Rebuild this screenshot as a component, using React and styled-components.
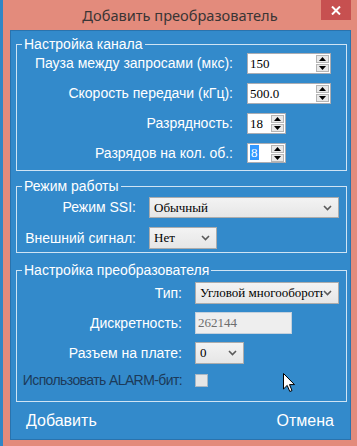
import React from "react";
import styled, { createGlobalStyle } from "styled-components";

const Global = createGlobalStyle`
  html, body { margin: 0; padding: 0; }
  body {
    background: #2f86c6;
    font-family: "Liberation Sans", Arial, sans-serif;
    width: 357px;
    height: 446px;
    overflow: hidden;
  }
`;

const Screen = styled.div`
  position: relative;
  display: flex;
  height: 446px;
  padding-left: 3px;
  box-sizing: border-box;
`;

const Window = styled.div`
  width: 354px;
  height: 446px;
  background: #e38b7c;
  display: flex;
  flex-direction: column;
`;

const TitleBar = styled.div`
  height: 30px;
  display: grid;
  grid-template-columns: 1fr auto 1fr;
  align-items: start;
`;

const Title = styled.div`
  grid-column: 2;
  align-self: center;
  font-family: "Noto Sans", "Liberation Sans", sans-serif;
  font-size: 14.6px;
  color: #3a3535;
  white-space: nowrap;
`;

const Close = styled.div`
  grid-column: 3;
  justify-self: end;
  margin-right: 6px;
  width: 30px;
  height: 20px;
  background: #c75050;
  display: flex;
  align-items: center;
  justify-content: center;
`;

const Client = styled.div`
  margin: 0 6px 0 7px;
  height: 410px;
  box-sizing: border-box;
  border: 1px solid #2a73ad;
  background: #338acb;
  display: flex;
  flex-direction: column;
  padding: 5px 3px 0 5px;
`;

const Group = styled.fieldset`
  margin: ${(p) => p.$mt || 0}px 0 0 0;
  border: 1px solid #cfe4f4;
  padding: ${(p) => p.$pt}px 0 ${(p) => p.$pb}px 0;
  min-width: 0;
`;

const Legend = styled.legend`
  margin-left: 5px;
  padding: 0 2px;
  font-size: 14px;
  line-height: 16px;
  color: #ffffff;
`;

const Rows = styled.div`
  display: grid;
  grid-template-columns: ${(p) => p.$label}px auto;
  column-gap: ${(p) => p.$gap}px;
  row-gap: ${(p) => p.$rowGap}px;
  align-items: center;
  justify-items: start;
`;

const Label = styled.div`
  justify-self: end;
  font-size: 14px;
  line-height: 17px;
  letter-spacing: ${(p) => (p.$tight ? "-0.6px" : "normal")};
  color: ${(p) => (p.$dim ? "#1c3a5a" : "#ffffff")};
  white-space: nowrap;
`;

const Box = styled.div`
  width: ${(p) => p.$w}px;
  height: ${(p) => p.$h || 21}px;
  box-sizing: border-box;
  border: 1px solid ${(p) => (p.$disabled ? "#c4d0dc" : "#abadb3")};
  background: ${(p) => (p.$disabled ? "#eeeeee" : "#ffffff")};
  display: flex;
  align-items: center;
  font-family: "Liberation Serif", "Times New Roman", serif;
  font-size: 13px;
  color: ${(p) => (p.$disabled ? "#6d6d6d" : "#000000")};
  padding-left: 2px;
`;

const BoxText = styled.span`
  flex: 1;
  white-space: nowrap;
  overflow: hidden;
`;

const Selected = styled.span`
  background: #3399ff;
  color: #ffffff;
  padding: 0 1px;
`;

const SpinCol = styled.div`
  display: flex;
  flex-direction: column;
  gap: 1px;
  width: 13px;
  margin: 0 1px;
`;

const SpinBtn = styled.div`
  height: 8px;
  box-sizing: border-box;
  border: 1px solid #b5b5b5;
  background: #e8e8e8;
  display: flex;
  align-items: center;
  justify-content: center;
`;

const Select = styled.div`
  width: ${(p) => p.$w}px;
  height: ${(p) => p.$h || 22}px;
  box-sizing: border-box;
  border: 1px solid #acacac;
  background: linear-gradient(#f3f3f3, #e6e6e6);
  display: flex;
  align-items: center;
  padding: 0 6px 0 4px;
  font-family: "Liberation Serif", "Times New Roman", serif;
  font-size: 13px;
  color: #000;
`;

const Check = styled.div`
  width: 13px;
  height: 13px;
  box-sizing: border-box;
  border: 1px solid #a9b7c4;
  background: #e6e6e6;
`;

const Footer = styled.div`
  flex: 1;
  display: flex;
  align-items: center;
  justify-content: space-between;
  padding: 0 13px 0 10px;
`;

const FooterButton = styled.div`
  font-size: 16px;
  color: #ffffff;
`;

const Cursor = styled.svg`
  position: absolute;
  left: 283px;
  top: 373px;
`;

const Tri = ({ up }) => (
  <svg width="7" height="4" viewBox="0 0 7 4">
    <path d={up ? "M3.5 0 L7 4 L0 4 Z" : "M0 0 L7 0 L3.5 4 Z"} fill="#000" />
  </svg>
);

const Chevron = () => (
  <svg width="9" height="6" viewBox="0 0 9 6">
    <path d="M1 1 L4.5 4.5 L8 1" fill="none" stroke="#5a5a5a" strokeWidth="1.6" />
  </svg>
);

const Spinner = ({ w, h, children }) => (
  <Box $w={w} $h={h}>
    <BoxText>{children}</BoxText>
    <SpinCol>
      <SpinBtn>
        <Tri up />
      </SpinBtn>
      <SpinBtn>
        <Tri />
      </SpinBtn>
    </SpinCol>
  </Box>
);

const Combo = ({ w, h, children }) => (
  <Select $w={w} $h={h}>
    <BoxText>{children}</BoxText>
    <Chevron />
  </Select>
);

export default function App() {
  return (
    <>
      <Global />
      <Screen>
        <Window>
          <TitleBar>
            <Title>Добавить преобразователь</Title>
            <Close>
              <svg width="10" height="9" viewBox="0 0 10 9">
                <path d="M1 0.5 L9 8.5 M9 0.5 L1 8.5" stroke="#fff" strokeWidth="2" />
              </svg>
            </Close>
          </TitleBar>
          <Client>
            <Group $pt={1} $pb={7}>
              <Legend>Настройка канала</Legend>
              <Rows $label={216} $gap={14} $rowGap={9}>
                <Label>Пауза между запросами (мкс):</Label>
                <Spinner w={84}>150</Spinner>
                <Label>Скорость передачи (кГц):</Label>
                <Spinner w={84}>500.0</Spinner>
                <Label>Разрядность:</Label>
                <Spinner w={39}>18</Spinner>
                <Label>Разрядов на кол. об.:</Label>
                <Spinner w={39} h={20}>
                  <Selected>8</Selected>
                </Spinner>
              </Rows>
            </Group>
            <Group $mt={7} $pt={3} $pb={3}>
              <Legend>Режим работы</Legend>
              <Rows $label={119} $gap={13} $rowGap={9}>
                <Label>Режим SSI:</Label>
                <Combo w={190} h={21}>Обычный</Combo>
                <Label>Внешний сигнал:</Label>
                <Combo w={68}>Нет</Combo>
              </Rows>
            </Group>
            <Group $mt={9} $pt={4} $pb={12}>
              <Legend>Настройка преобразователя</Legend>
              <Rows $label={165} $gap={13} $rowGap={8}>
                <Label>Тип:</Label>
                <Combo w={144}>Угловой многооборотный</Combo>
                <Label>Дискретность:</Label>
                <Box $w={97} $h={22} $disabled>
                  <BoxText>262144</BoxText>
                </Box>
                <Label>Разъем на плате:</Label>
                <Combo w={49}>0</Combo>
                <Label $dim $tight>Использовать ALARM-бит:</Label>
                <Check />
              </Rows>
            </Group>
            <Footer>
              <FooterButton>Добавить</FooterButton>
              <FooterButton>Отмена</FooterButton>
            </Footer>
          </Client>
        </Window>
        <Cursor width="13" height="20" viewBox="0 0 13 20">
          <path
            d="M0.5 0.5 L0.5 16 L4.2 12.4 L6.8 18.5 L9 17.6 L6.5 11.6 L11.5 11.6 Z"
            fill="#fff"
            stroke="#000"
            strokeWidth="1"
          />
        </Cursor>
      </Screen>
    </>
  );
}
